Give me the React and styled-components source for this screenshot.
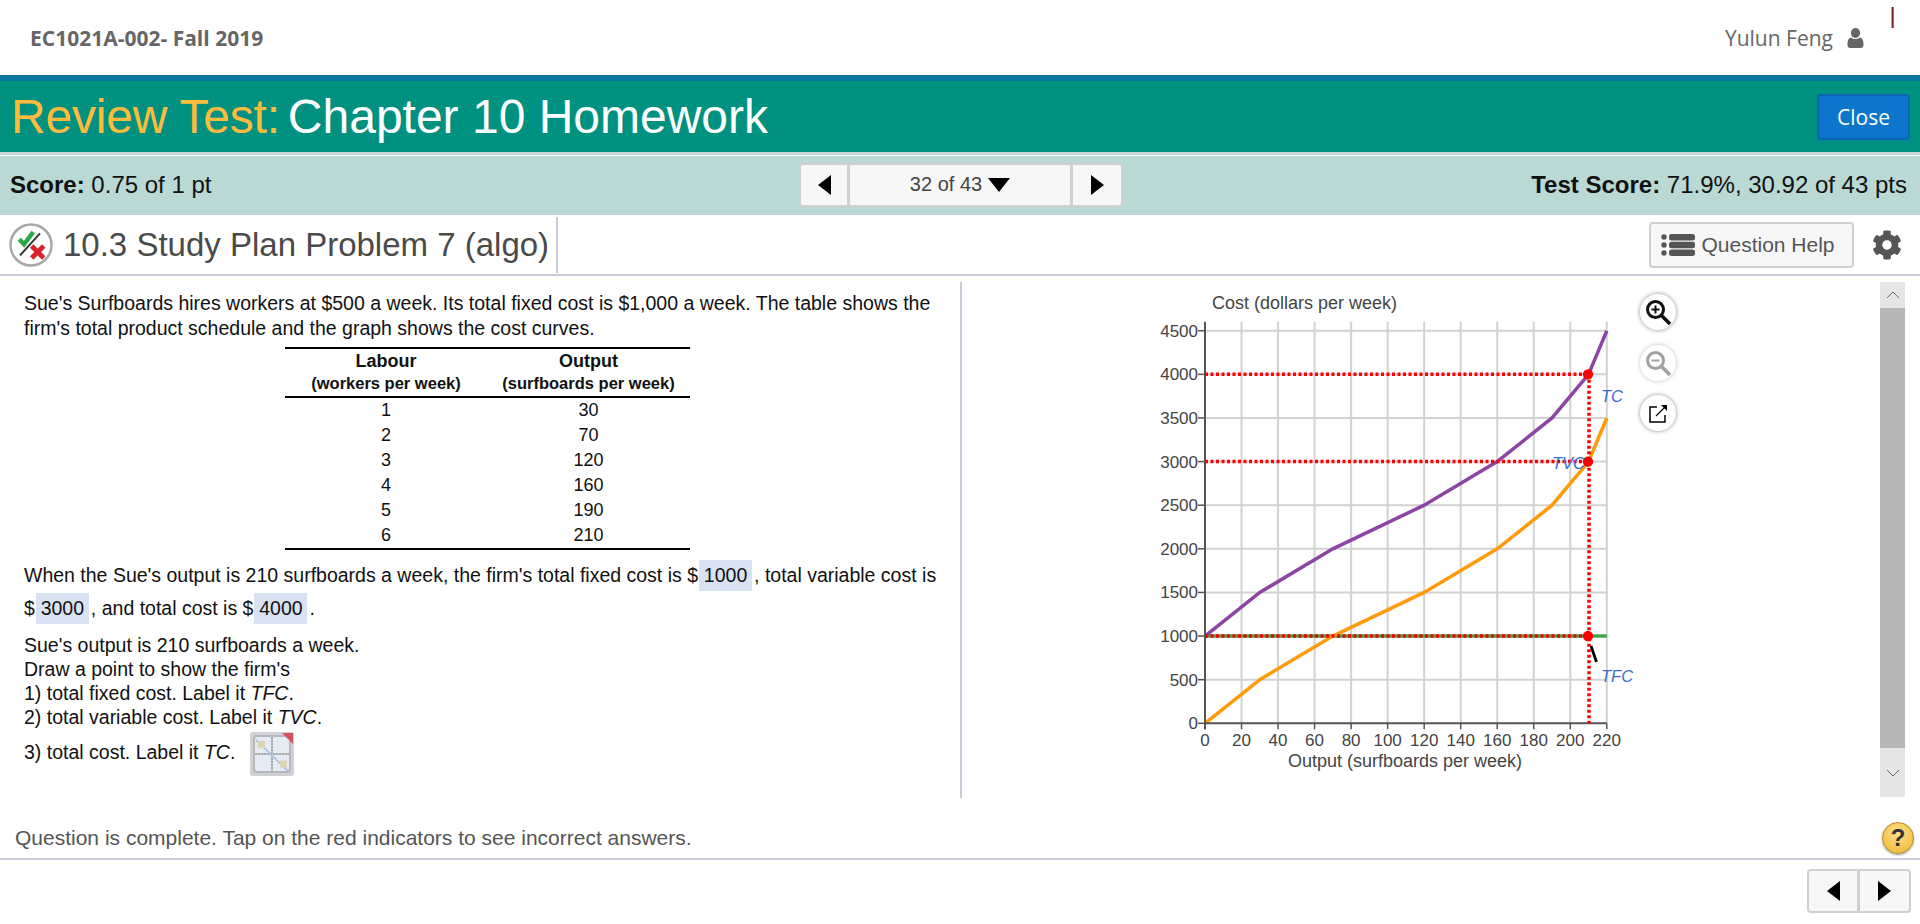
import React from 'react';
import styled, { createGlobalStyle } from 'styled-components';
import { FaCog } from 'react-icons/fa';

const GlobalStyle = createGlobalStyle`
  html, body {
    margin: 0;
    padding: 0;
    background: #fff;
    font-family: "Liberation Sans", Arial, sans-serif;
  }
  * { box-sizing: border-box; }
`;

const Page = styled.div`
  width: 1920px;
  height: 924px;
  overflow: hidden;
  display: flex;
  flex-direction: column;
`;

const TopBar = styled.div`
  height: 75px;
  flex: none;
  display: flex;
  align-items: center;
  justify-content: space-between;
  padding: 0 56px 0 30px;
  font-family: "Open Sans", sans-serif;
  font-size: 21px;
  color: #666;
`;

const Course = styled.div`
  font-weight: 700;
`;

const UserBox = styled.div`
  display: flex;
  align-items: center;
  gap: 14px;
`;

const TopTick = styled.div`
  position: absolute;
  left: 1891px;
  top: 7px;
  width: 3px;
  height: 21px;
  background: linear-gradient(90deg, #e8a040 33%, #7a2020 33%, #7a2020 66%, #3090e0 66%);
`;

const TitleBar = styled.div`
  height: 77px;
  flex: none;
  background: #009180;
  border-top: 6px solid #0a76a0;
  display: flex;
  align-items: center;
  justify-content: space-between;
  padding: 0 10px 0 11px;
`;

const TitleText = styled.h1`
  margin: 0;
  font-size: 48px;
  font-weight: 400;
  color: #fff;
  line-height: 69px;
  white-space: nowrap;
`;

const TitleLead = styled.span`
  color: #fdbb3e;
  margin-right: 8px;
  letter-spacing: -0.2px;
`;

const CloseButton = styled.button`
  width: 93px;
  height: 46px;
  background: #0d76cc;
  border: 2px solid #0a66b4;
  border-radius: 4px;
  color: #fff;
  font-family: "Open Sans", sans-serif;
  font-size: 21px;
  padding: 0;
`;

const ScoreBar = styled.div`
  flex: none;
  height: 63px;
  border-top: 3px solid #c9d6d3;
  box-shadow: inset 0 1px 0 #fff;
  background: #bad8d4;
  border-bottom: 1px solid #c8ccda;
  display: grid;
  grid-template-columns: 799px 324px 1fr;
  align-items: center;
  font-size: 24px;
  color: #111;
  padding-right: 13px;
`;

const ScoreText = styled.div`
  padding-left: 10px;
  white-space: nowrap;
  text-align: ${(p) => (p.$right ? 'right' : 'left')};

  b { font-weight: 700; }
`;

const Pager = styled.div`
  display: flex;
  height: ${(p) => p.$h}px;
  background: #f7f7f7;
  border: 2px solid #d0d0d0;
  border-radius: 4px;
`;

const PagerCell = styled.div`
  width: ${(p) => p.$w}px;
  flex: ${(p) => (p.$grow ? 1 : 'none')};
  display: flex;
  align-items: center;
  justify-content: center;
  gap: 6px;
  color: #444;
  font-size: 20px;
  border-right: ${(p) => (p.$divider ? '3px solid #d0d0d0' : '0')};
`;

const Tri = styled.i`
  display: block;
  width: 0;
  height: 0;
  border-style: solid;
  border-color: transparent;
  border-width: ${(p) => p.$size}px;
  ${(p) => p.$dir === 'left' && `border-left-width: 0; border-right: ${p.$long}px solid #000;`}
  ${(p) => p.$dir === 'right' && `border-right-width: 0; border-left: ${p.$long}px solid #000;`}
  ${(p) => p.$dir === 'down' && `border-bottom-width: 0; border-top: ${p.$long}px solid #000;`}
`;

const ProblemBar = styled.div`
  flex: none;
  height: 61px;
  border-bottom: 2px solid #c8ccda;
  display: flex;
  align-items: center;
  padding-right: 18px;
`;

const ProblemTitle = styled.div`
  height: 56px;
  display: flex;
  align-items: center;
  gap: 9px;
  padding: 0 7px 0 8px;
  border-right: 2px solid #c8ccda;
  font-size: 33px;
  color: #4a4a4a;
  white-space: nowrap;
`;

const HelpButton = styled.button`
  margin-left: auto;
  width: 205px;
  height: 46px;
  background: #f7f7f7;
  border: 2px solid #d0d0d0;
  border-radius: 4px;
  display: flex;
  align-items: center;
  justify-content: center;
  gap: 6px;
  padding: 0 7px 0 0;
  color: #555;
  font-family: "Liberation Sans", sans-serif;
  font-size: 21px;
`;

const GearIcon = styled(FaCog)`
  margin-left: 18px;
  width: 30px;
  height: 30px;
  color: #555;
`;

const Main = styled.div`
  flex: none;
  height: 540px;
  display: flex;
  padding-top: 6px;
`;

const LeftPane = styled.div`
  width: 962px;
  height: 516px;
  border-right: 2px solid #c8ccda;
  padding: 9px 20px 0 24px;
  font-size: 19.5px;
  color: #111;
`;

const Para = styled.p`
  margin: ${(p) => p.$mt || 0}px 0 ${(p) => p.$mb || 0}px;
  line-height: ${(p) => p.$lh || 24}px;
  white-space: nowrap;
`;

const Table = styled.table`
  width: 405px;
  margin: 7px 0 9px 261px;
  border-collapse: collapse;
  border-top: 2px solid #000;
  border-bottom: 2px solid #000;
  font-size: 18px;
  text-align: center;
  table-layout: fixed;

  td { padding: 0; height: 25px; line-height: 25px; }
  th { padding: 0; }
  thead tr:last-child th { border-bottom: 2px solid #000; padding-bottom: 2px; }
`;

const Head = styled.th`
  font-size: ${(p) => p.$size}px;
  font-weight: 700;
  line-height: ${(p) => p.$lh}px;
`;

const AnswerBox = styled.span`
  display: inline-block;
  background: #d9e2f3;
  width: 53px;
  text-align: center;
  line-height: 31px;
  margin: 0 2px 0 1px;
`;

const AnswerLine = styled.div`
  line-height: 33px;
  white-space: nowrap;
`;

const ToolRow = styled.div`
  display: flex;
  align-items: center;
  gap: 15px;
  height: 44px;
`;

const ToolLabel = styled.span`
  padding-bottom: 3px;
`;

const RightPane = styled.div`
  width: 918px;
  height: 516px;
  display: flex;
  padding-left: 178px;
`;

const ChartBox = styled.svg`
  width: 500px;
  height: 510px;
  flex: none;
  font-family: "Liberation Sans", sans-serif;
`;

const ChartTools = styled.div`
  margin: 12px 0 0 0;
  display: flex;
  flex-direction: column;
  gap: 14.5px;
  flex: none;
`;

const ToolCircle = styled.div`
  width: 36px;
  height: 36px;
  border-radius: 50%;
  background: #fff;
  box-shadow: 0 0 4px rgba(0, 0, 0, 0.45);
  display: flex;
  align-items: center;
  justify-content: center;
  opacity: ${(p) => (p.$dim ? 0.55 : 1)};
`;

const ScrollBar = styled.div`
  width: 25px;
  height: 515px;
  flex: none;
  display: flex;
  flex-direction: column;
  background: #e6e6e6;
`;

const ScrollArrow = styled.div`
  height: ${(p) => p.$h}px;
  flex: none;
  display: flex;
  align-items: center;
  justify-content: center;
`;

const ScrollThumb = styled.div`
  flex: 1;
  background: #b7b7b7;
`;

const Footer = styled.div`
  flex: none;
  height: 44px;
  border-bottom: 2px solid #c8ccda;
  display: flex;
  align-items: center;
  justify-content: space-between;
  padding: 2px 6px 0 15px;
  color: #555;
  font-size: 21px;
`;

const HelpDot = styled.div`
  width: 32px;
  height: 32px;
  border-radius: 50%;
  background: radial-gradient(circle at 50% 35%, #fde08a, #efb431);
  border: 1px solid #b98a20;
  box-shadow: 0 1px 2px rgba(0, 0, 0, 0.4);
  display: flex;
  align-items: center;
  justify-content: center;
  color: #333;
  font-weight: 700;
  font-size: 24px;
`;

const BottomNav = styled.div`
  flex: none;
  display: flex;
  justify-content: flex-end;
  padding: 9px 9px 0 0;
`;

const UserIcon = () => (
  <svg width="17" height="20" viewBox="0 0 16 20" fill="#666">
    <ellipse cx="8" cy="5" rx="4.6" ry="5" />
    <path d="M0 17c0-4 .7-7 3.600-7.600C5 10.600 6.400 11 8 11s3-.4 4.400-1.600C15.300 10 16 13 16 17c0 2-1.200 3-2.800 3H2.800C1.200 20 0 19 0 17z" />
  </svg>
);

const ScoreIcon = () => (
  <svg width="46" height="44" viewBox="0 0 46 44">
    <circle cx="23" cy="22" r="20.500" fill="#fff" stroke="#a8a8a8" strokeWidth="2.500" />
    <path d="M11.300 16.300l4.700 5L25.300 9" fill="none" stroke="#2aa84a" strokeWidth="4.500" />
    <path d="M12 32.300L32 10.300" stroke="#333" strokeWidth="2" />
    <path d="M23.700 23l12 12M35.700 23l-12 12" stroke="#d8232f" strokeWidth="4.800" />
  </svg>
);

const ListIcon = () => (
  <svg width="34" height="22" viewBox="0 0 34 22" fill="#555">
    <circle cx="3" cy="3" r="2.700" />
    <circle cx="3" cy="11" r="2.700" />
    <circle cx="3" cy="19" r="2.700" />
    <rect x="8" y="0" width="26" height="6.500" rx="2.500" />
    <rect x="8" y="7.800" width="26" height="6.500" rx="2.500" />
    <rect x="8" y="15.500" width="26" height="6.500" rx="2.500" />
  </svg>
);

const GraphToolIcon = () => (
  <svg width="44" height="44" viewBox="0 0 44 44">
    <rect x="0" y="0" width="44" height="44" rx="3" fill="#cfd1d5" />
    <rect x="4" y="4" width="36" height="36" rx="3" fill="#e6ebf3" stroke="#b4b7bc" strokeWidth="2" />
    <path d="M22 4v36M4 22h36" stroke="#a5a9b0" strokeWidth="2" />
    <path d="M22 4v36M4 22h36" stroke="#e6ebf3" strokeWidth="1" strokeDasharray="1 2" />
    <path d="M6 8l32 31" stroke="#a9c4e4" strokeWidth="1.800" />
    <rect x="8" y="9" width="7" height="7" fill="#dcd5b4" />
    <rect x="30" y="28.500" width="7" height="7" fill="#dcd5b4" />
    <path d="M32 1h11v11z" fill="#d4545a" />
  </svg>
);

const ZoomIcon = ({ minus, color }) => (
  <svg width="28" height="28" viewBox="0 0 28 28" fill="none" stroke={color} strokeWidth="3">
    <circle cx="11.500" cy="11.500" r="8" />
    <path d="M17.500 17.500L26 26" strokeWidth="3.500" />
    <path d={minus ? 'M7.500 11.500h8' : 'M7.500 11.500h8M11.500 7.500v8'} strokeWidth="2" />
  </svg>
);

const ExternalIcon = () => (
  <svg width="20" height="20" viewBox="0 0 20 20" fill="none" stroke="#000" strokeWidth="1.500">
    <path d="M9 4H2v15h15v-7" />
    <path d="M8 13L17 4" strokeWidth="1.200" />
    <path d="M13 2h6v6z" fill="#000" stroke="none" />
  </svg>
);

const X = (v) => 65 + v * 1.8264;
const Y = (c) => 441.3 - c * 0.08724;

const points = (rows) => rows.map(([v, c]) => `${X(v)},${Y(c)}`).join(' ');

const tcCurve = [[0, 1000], [30, 1500], [70, 2000], [120, 2500], [160, 3000], [190, 3500], [210, 4000], [220, 4500]];
const tvcCurve = [[0, 0], [30, 500], [70, 1000], [120, 1500], [160, 2000], [190, 2500], [210, 3000], [220, 3500]];
const xTicks = [0, 20, 40, 60, 80, 100, 120, 140, 160, 180, 200, 220];
const yTicks = [0, 500, 1000, 1500, 2000, 2500, 3000, 3500, 4000, 4500];
const AXIS_TEXT = '#444';
const LABEL_BLUE = '#3a6fd0';

const CostChart = () => (
  <ChartBox viewBox="0 0 500 510">
    {xTicks.slice(1).map((v) => (
      <line key={v} x1={X(v)} x2={X(v)} y1={Y(4500) - 9} y2={Y(0)} stroke="#d2d2d2" strokeWidth="2" />
    ))}
    {yTicks.slice(1).map((c) => (
      <line key={c} x1={X(0)} x2={X(220)} y1={Y(c)} y2={Y(c)} stroke="#d2d2d2" strokeWidth="2" />
    ))}
    <polyline points={points([[0, 1000], [220, 1000]])} stroke="#3ea34a" strokeWidth="3.500" fill="none" />
    <polyline points={points(tcCurve)} stroke="#8e44a4" strokeWidth="3.500" fill="none" />
    <polyline points={points(tvcCurve)} stroke="#ff9a0a" strokeWidth="3.500" fill="none" />

    <line x1={X(0)} x2={X(0)} y1={Y(4500) - 9} y2={Y(0) + 6} stroke="#555" strokeWidth="2" />
    <line x1={X(0)} x2={X(220)} y1={Y(0)} y2={Y(0)} stroke="#555" strokeWidth="2" />
    {xTicks.map((v) => (
      <g key={v}>
        <line x1={X(v)} x2={X(v)} y1={Y(0)} y2={Y(0) + 6} stroke="#555" strokeWidth="1.500" />
        <text x={X(v)} y={Y(0) + 23} fontSize="17" fill={AXIS_TEXT} textAnchor="middle">{v}</text>
      </g>
    ))}
    {yTicks.map((c) => (
      <g key={c}>
        <line x1={X(0) - 7} x2={X(0)} y1={Y(c)} y2={Y(c)} stroke="#555" strokeWidth="1.500" />
        <text x={X(0) - 7} y={Y(c) + 6} fontSize="17" fill={AXIS_TEXT} textAnchor="end">{c}</text>
      </g>
    ))}
    <text x="72" y="27" fontSize="18" fill={AXIS_TEXT}>Cost (dollars per week)</text>
    <text x="265" y="485" fontSize="18" fill={AXIS_TEXT} textAnchor="middle">Output (surfboards per week)</text>

    <g stroke="#ff0000" strokeWidth="3.500" strokeDasharray="3 2.500" fill="none">
      <line x1={X(0)} x2={448} y1={Y(4000)} y2={Y(4000)} />
      <line x1={X(0)} x2={448} y1={Y(3000)} y2={Y(3000)} />
      <line x1={X(0)} x2={448} y1={Y(1000)} y2={Y(1000)} />
      <line x1={449} x2={449} y1={Y(4000)} y2={Y(0)} />
    </g>
    <circle cx="448" cy={Y(4000)} r="5.200" fill="#ff0000" />
    <circle cx="448" cy={Y(3000)} r="5.200" fill="#ff0000" />
    <circle cx="448" cy={Y(1000)} r="5.200" fill="#ff0000" />
    <line x1="451" y1="364" x2="456.500" y2="380" stroke="#000" strokeWidth="2.800" />

    <g fill={LABEL_BLUE} fontSize="16.500" fontStyle="italic">
      <text x="461" y="120">TC</text>
      <text x="412" y="187">TVC</text>
      <text x="461" y="400">TFC</text>
    </g>
  </ChartBox>
);

const rows = [[1, 30], [2, 70], [3, 120], [4, 160], [5, 190], [6, 210]];

export default function App() {
  return (
    <Page>
      <GlobalStyle />
      <TopTick />
      <TopBar>
        <Course>EC1021A-002- Fall 2019</Course>
        <UserBox>
          Yulun Feng
          <UserIcon />
        </UserBox>
      </TopBar>

      <TitleBar>
        <TitleText><TitleLead>Review Test:</TitleLead>Chapter 10 Homework</TitleText>
        <CloseButton>Close</CloseButton>
      </TitleBar>

      <ScoreBar>
        <ScoreText><b>Score:</b> 0.75 of 1 pt</ScoreText>
        <Pager $h={44}>
          <PagerCell $w={49} $divider><Tri $dir="left" $size={10} $long={13} /></PagerCell>
          <PagerCell $grow $divider>32 of 43 <Tri $dir="down" $size={11} $long={14} /></PagerCell>
          <PagerCell $w={48}><Tri $dir="right" $size={10} $long={13} /></PagerCell>
        </Pager>
        <ScoreText $right><b>Test Score:</b> 71.9%, 30.92 of 43 pts</ScoreText>
      </ScoreBar>

      <ProblemBar>
        <ProblemTitle>
          <ScoreIcon />
          10.3 Study Plan Problem 7 (algo)
        </ProblemTitle>
        <HelpButton><ListIcon />Question Help</HelpButton>
        <GearIcon />
      </ProblemBar>

      <Main>
        <LeftPane>
          <Para $lh={24.5}>Sue's Surfboards hires workers at $500 a week. Its total fixed cost is $1,000 a week. The table shows the</Para>
          <Para $lh={24.5}>firm's total product schedule and the graph shows the cost curves.</Para>
          <Table>
            <colgroup>
              <col width="202" />
              <col width="203" />
            </colgroup>
            <thead>
              <tr><Head $size={18} $lh={24}>Labour</Head><Head $size={18} $lh={24}>Output</Head></tr>
              <tr><Head $size={16.5} $lh={21}>(workers per week)</Head><Head $size={16.5} $lh={21}>(surfboards per week)</Head></tr>
            </thead>
            <tbody>
              {rows.map(([labour, output]) => (
                <tr key={labour}><td>{labour}</td><td>{output}</td></tr>
              ))}
            </tbody>
          </Table>
          <AnswerLine>
            When the Sue's output is 210 surfboards a week, the firm's total fixed cost is $<AnswerBox>1000</AnswerBox>, total variable cost is
          </AnswerLine>
          <AnswerLine>
            $<AnswerBox>3000</AnswerBox>, and total cost is $<AnswerBox>4000</AnswerBox>.
          </AnswerLine>
          <Para $lh={24} $mt={8}>Sue's output is 210 surfboards a week.</Para>
          <Para $lh={24}>Draw a point to show the firm's</Para>
          <Para $lh={24}>1) total fixed cost. Label it <i>TFC</i>.</Para>
          <Para $lh={24} $mb={3}>2) total variable cost. Label it <i>TVC</i>.</Para>
          <ToolRow>
            <ToolLabel>3) total cost. Label it <i>TC</i>.</ToolLabel>
            <GraphToolIcon />
          </ToolRow>
        </LeftPane>
        <RightPane>
          <CostChart />
          <ChartTools>
            <ToolCircle><ZoomIcon color="#111" /></ToolCircle>
            <ToolCircle $dim><ZoomIcon minus color="#555" /></ToolCircle>
            <ToolCircle><ExternalIcon /></ToolCircle>
          </ChartTools>
        </RightPane>
        <ScrollBar>
          <ScrollArrow $h={26}>
            <svg width="14" height="8" viewBox="0 0 14 8" fill="none" stroke="#666"><path d="M1 7l6-6 6 6" /></svg>
          </ScrollArrow>
          <ScrollThumb />
          <ScrollArrow $h={49}>
            <svg width="14" height="8" viewBox="0 0 14 8" fill="none" stroke="#666"><path d="M1 1l6 6 6-6" /></svg>
          </ScrollArrow>
        </ScrollBar>
      </Main>

      <Footer>
        Question is complete. Tap on the red indicators to see incorrect answers.
        <HelpDot>?</HelpDot>
      </Footer>

      <BottomNav>
        <Pager $h={44}>
          <PagerCell $w={51} $divider><Tri $dir="left" $size={10} $long={13} /></PagerCell>
          <PagerCell $w={49}><Tri $dir="right" $size={10} $long={13} /></PagerCell>
        </Pager>
      </BottomNav>
    </Page>
  );
}
